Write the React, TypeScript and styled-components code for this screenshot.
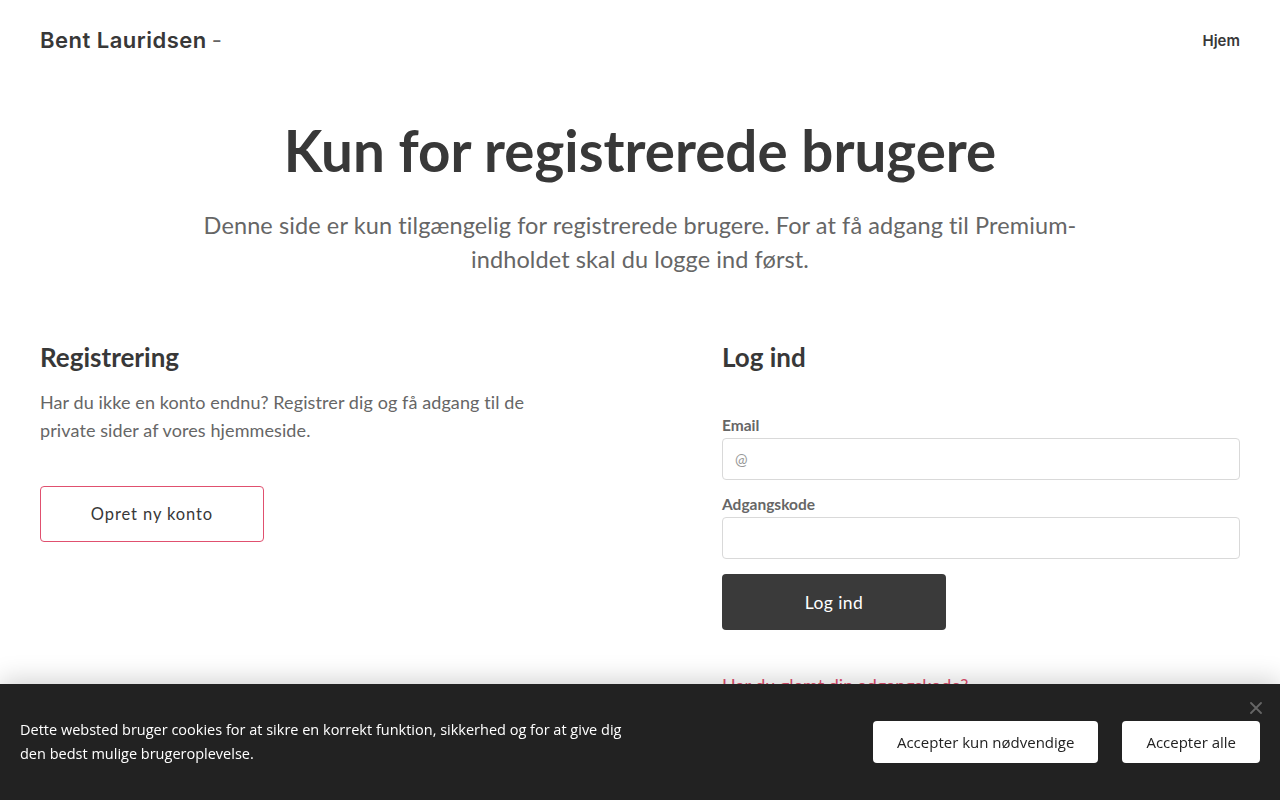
import React from 'react';
import styled, { createGlobalStyle } from 'styled-components';

const GlobalStyle = createGlobalStyle`
    * { box-sizing: border-box; }
    body {
        margin: 0;
        background: #fff;
        font-family: Lato, "Noto Sans", sans-serif;
        color: #383838;
    }
`;

const Header = styled.header`
    height: 80px;
    padding: 0 40px;
    display: flex;
    align-items: center;
    justify-content: space-between;
`;

const Brand = styled.div`
    font-family: Inter, sans-serif;
    font-size: 22px;
    font-weight: 600;
    letter-spacing: 0.5px;
    color: #383838;
    span {
        font-weight: 400;
        color: #666;
        margin-left: 5px;
    }
`;

const NavLink = styled.a`
    font-family: Inter, sans-serif;
    font-size: 15px;
    font-weight: 600;
    color: #383838;
    text-decoration: none;
`;

const Main = styled.main`
    padding: 0 40px 140px;
`;

const Hero = styled.section`
    text-align: center;
    padding-top: 40px;
`;

const Title = styled.h1`
    margin: 0;
    font-size: 56.5px;
    line-height: 60px;
    font-weight: 700;
    color: #383838;
`;

const Lead = styled.p`
    margin: 28px auto 0;
    max-width: 900px;
    font-size: 23.5px;
    line-height: 34px;
    letter-spacing: 0.1px;
    color: #666;
`;

const Columns = styled.div`
    display: grid;
    grid-template-columns: 682px 1fr;
    margin-top: 66px;
`;

const Column = styled.div<{ narrow?: boolean }>`
    max-width: ${p => (p.narrow ? '520px' : 'none')};
`;

const SectionTitle = styled.h2`
    margin: 0;
    font-size: 26px;
    line-height: 31px;
    font-weight: 700;
    color: #383838;
`;

const Text = styled.p`
    margin: 15px 0 0;
    font-size: 18px;
    line-height: 28px;
    letter-spacing: 0.1px;
    color: #666;
`;

const OutlineButton = styled.button`
    margin-top: 42px;
    width: 224px;
    height: 56px;
    border: 1px solid #e0506f;
    border-radius: 4px;
    background: #fff;
    font-family: inherit;
    font-size: 16.5px;
    letter-spacing: 0.9px;
    color: #383838;
    cursor: pointer;
`;

const Form = styled.form`
    margin-top: 42px;
    display: flex;
    flex-direction: column;
`;

const Label = styled.label<{ first?: boolean }>`
    display: block;
    margin-top: ${p => (p.first ? '0' : '14px')};
    font-size: 15.5px;
    line-height: 20px;
    font-weight: 700;
    color: #666;
`;

const Input = styled.input`
    margin-top: 3px;
    width: 100%;
    height: 42px;
    padding: 0 12px;
    border: 1px solid #d9d9d9;
    border-radius: 4px;
    font-family: inherit;
    font-size: 15px;
    color: #383838;
    &::placeholder {
        color: #999;
    }
`;

const SolidButton = styled.button`
    margin-top: 15px;
    width: 224px;
    height: 56px;
    border: none;
    border-radius: 4px;
    background: #3a3a3a;
    color: #fff;
    font-family: inherit;
    font-size: 17.5px;
    letter-spacing: 0.4px;
    cursor: pointer;
`;

const ForgotLink = styled.a`
    display: block;
    margin-top: 43px;
    font-size: 18px;
    line-height: 24px;
    color: #e0506f;
    text-decoration: none;
`;

const CookieBar = styled.div`
    position: fixed;
    left: 0;
    right: 0;
    bottom: 0;
    height: 116px;
    padding: 0 20px;
    background: #222;
    box-shadow: 0 -4px 24px rgba(0, 0, 0, 0.18);
    display: flex;
    align-items: center;
    justify-content: space-between;
    font-family: "Open Sans", sans-serif;
`;

const CookieText = styled.p`
    margin: 0;
    max-width: 620px;
    font-size: 14.5px;
    line-height: 24px;
    color: #fff;
`;

const CookieActions = styled.div`
    display: flex;
    gap: 24px;
`;

const CookieButton = styled.button`
    height: 42px;
    padding: 0 24px;
    border: none;
    border-radius: 4px;
    background: #fff;
    font-family: "Open Sans", sans-serif;
    font-size: 15px;
    color: #222;
    cursor: pointer;
`;

const Close = styled.button`
    position: absolute;
    top: 18px;
    right: 18px;
    padding: 0;
    border: none;
    background: none;
    color: #666;
    display: flex;
    cursor: pointer;
`;

export default function App() {
    return (
        <>
            <GlobalStyle />
            <Header>
                <Brand>Bent Lauridsen<span>-</span></Brand>
                <NavLink href="#">Hjem</NavLink>
            </Header>
            <Main>
                <Hero>
                    <Title>Kun for registrerede brugere</Title>
                    <Lead>
                        Denne side er kun tilgængelig for registrerede brugere. For at få adgang til Premium-indholdet skal du logge ind først.
                    </Lead>
                </Hero>
                <Columns>
                    <Column narrow>
                        <SectionTitle>Registrering</SectionTitle>
                        <Text>
                            Har du ikke en konto endnu? Registrer dig og få adgang til de private sider af vores hjemmeside.
                        </Text>
                        <OutlineButton>Opret ny konto</OutlineButton>
                    </Column>
                    <Column>
                        <SectionTitle>Log ind</SectionTitle>
                        <Form onSubmit={e => e.preventDefault()}>
                            <Label first htmlFor="email">Email</Label>
                            <Input id="email" type="email" placeholder="@" />
                            <Label htmlFor="pw">Adgangskode</Label>
                            <Input id="pw" type="password" />
                            <SolidButton type="submit">Log ind</SolidButton>
                        </Form>
                        <ForgotLink href="#">Har du glemt din adgangskode?</ForgotLink>
                    </Column>
                </Columns>
            </Main>
            <CookieBar>
                <CookieText>
                    Dette websted bruger cookies for at sikre en korrekt funktion, sikkerhed og for at give dig den bedst mulige brugeroplevelse.
                </CookieText>
                <CookieActions>
                    <CookieButton>Accepter kun nødvendige</CookieButton>
                    <CookieButton>Accepter alle</CookieButton>
                </CookieActions>
                <Close aria-label="Luk">
                    <svg width="12" height="12" viewBox="0 0 12 12">
                        <path d="M1 1 L11 11 M11 1 L1 11" stroke="currentColor" strokeWidth="1.8" strokeLinecap="round" />
                    </svg>
                </Close>
            </CookieBar>
        </>
    );
}
